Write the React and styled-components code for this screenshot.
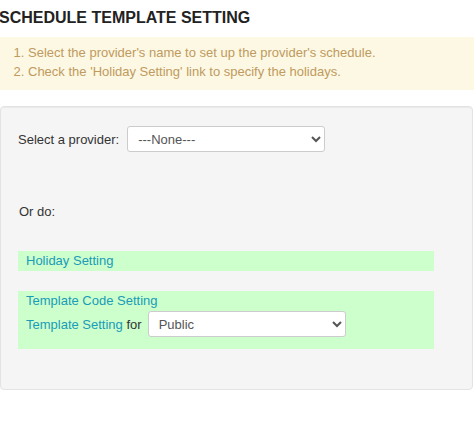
import styled, { createGlobalStyle } from 'styled-components';

const GlobalStyle = createGlobalStyle`
  body {
    margin: 0;
    background: #fff;
    font-family: "Liberation Sans", Arial, sans-serif;
    font-size: 13px;
    color: #333;
  }
`;

function App() {
  return (
    <Page>
      <GlobalStyle />
      <Title>SCHEDULE TEMPLATE SETTING</Title>
      <Notice>
        <li>Select the provider's name to set up the provider's schedule.</li>
        <li>Check the 'Holiday Setting' link to specify the holidays.</li>
      </Notice>
      <Well>
        <Row>
          <Label>Select a provider:</Label>
          <Select defaultValue="none">
            <option value="none">---None---</option>
          </Select>
        </Row>
        <OrDo>Or do:</OrDo>
        <GreenBox>
          <Link href="#">Holiday Setting</Link>
        </GreenBox>
        <GreenBox $tall>
          <Link href="#">Template Code Setting</Link>
          <Row $gap={6}>
            <span>
              <Link href="#">Template Setting</Link> for
            </span>
            <Select defaultValue="public">
              <option value="public">Public</option>
            </Select>
          </Row>
        </GreenBox>
      </Well>
    </Page>
  );
}

export default App;

const Page = styled.div`
  width: 474px;
  padding-top: 9px;
`;

const Title = styled.h1`
  margin: 0 0 10px -1px;
  font-size: 16px;
  font-weight: bold;
  color: #222;
  line-height: 18px;
`;

const Notice = styled.ol`
  margin: 0;
  padding: 6px 0 9px 28px;
  background: #fcf8e3;
  color: #c09a60;
  font-size: 13px;
  line-height: 19px;
`;

const Well = styled.div`
  margin-top: 16px;
  width: 454px;
  padding: 19px 0 0 17px;
  background: #f5f5f5;
  border: 1px solid #e3e3e3;
  border-radius: 4px;
  box-shadow: inset 0 1px 1px rgba(0, 0, 0, 0.05);
`;

const Row = styled.div`
  display: flex;
  align-items: center;
  gap: ${(p) => p.$gap ?? 8}px;
`;

const Label = styled.span`
  color: #333;
`;

const Select = styled.select`
  width: 198px;
  height: 26px;
  padding: 0 6px;
  border: 1px solid #ccc;
  border-radius: 3px;
  background: #fff;
  font-family: "Liberation Sans", Arial, sans-serif;
  font-size: 13px;
  color: #555;
`;

const OrDo = styled.div`
  margin: 52px 0 32px 1px;
`;

const GreenBox = styled.div`
  width: 408px;
  margin-bottom: ${(p) => (p.$tall ? '40px' : '20px')};
  padding: ${(p) => (p.$tall ? '2px 0 12px 8px' : '2px 0 3px 8px')};
  background: #ccffcc;
  display: flex;
  flex-direction: column;
  gap: 3px;
  line-height: 15px;
`;

const Link = styled.a`
  color: #1a9bb8;
  text-decoration: none;
`;
